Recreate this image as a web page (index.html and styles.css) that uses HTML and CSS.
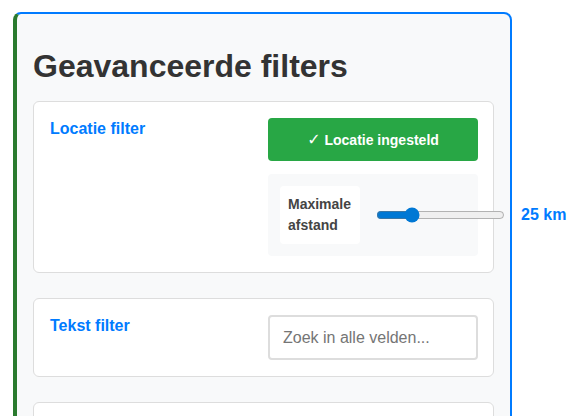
FILE: index.html
```html
<!DOCTYPE html>
<html lang="nl">
<head>
<meta charset="utf-8">
<title>Geavanceerde filters</title>
<link rel="stylesheet" href="styles.css">
</head>
<body>
<section class="panel">
  <h1 class="panel-title">Geavanceerde filters</h1>

  <div class="filter-card">
    <h3 class="filter-label">Locatie filter</h3>
    <div class="filter-controls">
      <button class="btn-location" type="button"><span class="check">✓</span> Locatie ingesteld</button>
      <div class="distance-box">
        <label class="distance-label" for="dist">Maximale afstand</label>
        <input class="distance-range" id="dist" type="range" min="0" max="100" value="25">
        <span class="distance-value">25 km</span>
      </div>
    </div>
  </div>

  <div class="filter-card">
    <h3 class="filter-label">Tekst filter</h3>
    <div class="filter-controls">
      <input class="text-input" type="text" placeholder="Zoek in alle velden...">
    </div>
  </div>

  <div class="filter-card filter-card-empty"></div>
</section>
</body>
</html>
```

FILE: styles.css
```css
html, body {
  margin: 0;
  padding: 0;
  background: #ffffff;
}

body {
  padding: 12px 0 0 13px;
  font-family: "Liberation Sans", Arial, sans-serif;
  color: #333;
}

.panel {
  width: 461px;
  background: #f8f9fa;
  border: 2px solid #007bff;
  border-left: 4px solid #2a7a2e;
  border-radius: 8px;
  padding: 34px 16px 16px 16px;
}

.panel-title {
  margin: 0 0 16px 0;
  font-size: 32px;
  font-weight: bold;
  color: #333;
  line-height: 37px;
}

.filter-card {
  background: #fff;
  border: 1px solid #ddd;
  border-radius: 6px;
  padding: 16px 15px 16px 16px;
  margin-bottom: 25px;
  display: grid;
  grid-template-columns: 1fr 210px;
  align-items: start;
}

.filter-card-empty {
  min-height: 60px;
}

.filter-label {
  margin: 0;
  font-size: 16px;
  line-height: 22px;
  font-weight: bold;
  color: #007bff;
}

.filter-controls {
  display: flex;
  flex-direction: column;
  gap: 13px;
}

.btn-location {
  height: 43px;
  border: none;
  border-radius: 4px;
  background: #28a745;
  color: #fff;
  font-family: "Liberation Sans", Arial, "DejaVu Sans", sans-serif;
  font-size: 14px;
  font-weight: bold;
  cursor: pointer;
}

.check {
  font-family: "DejaVu Sans", sans-serif;
  font-size: 16px;
  font-weight: bold;
}

.distance-box {
  background: #f8f9fa;
  border-radius: 4px;
  padding: 12px;
  display: flex;
  align-items: center;
  gap: 16px;
}

.distance-label {
  flex: none;
  width: 64px;
  background: #fff;
  border-radius: 4px;
  padding: 8px;
  font-size: 14px;
  font-weight: bold;
  line-height: 21px;
  color: #444;
}

.distance-range {
  flex: none;
  width: 129px;
  margin: 0;
  accent-color: #0078d4;
}

.distance-value {
  flex: none;
  font-size: 16px;
  font-weight: bold;
  color: #007bff;
  white-space: nowrap;
}

.text-input {
  box-sizing: border-box;
  height: 45px;
  width: 210px;
  border: 2px solid #ddd;
  border-radius: 4px;
  padding: 0 13px;
  font-family: "Liberation Sans", Arial, sans-serif;
  font-size: 16px;
  color: #333;
  background: #fff;
}

.text-input::placeholder {
  color: #757575;
}
```
